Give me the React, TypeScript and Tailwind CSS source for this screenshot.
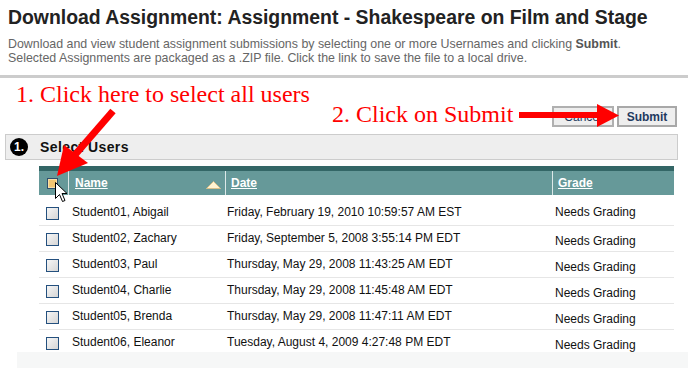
import React from 'react';

interface Submission {
  name: string;
  date: string;
  grade: string;
}

const rows: Submission[] = [
  { name: 'Student01, Abigail', date: 'Friday, February 19, 2010 10:59:57 AM EST', grade: 'Needs Grading' },
  { name: 'Student02, Zachary', date: 'Friday, September 5, 2008 3:55:14 PM EDT', grade: 'Needs Grading' },
  { name: 'Student03, Paul', date: 'Thursday, May 29, 2008 11:43:25 AM EDT', grade: 'Needs Grading' },
  { name: 'Student04, Charlie', date: 'Thursday, May 29, 2008 11:45:48 AM EDT', grade: 'Needs Grading' },
  { name: 'Student05, Brenda', date: 'Thursday, May 29, 2008 11:47:11 AM EDT', grade: 'Needs Grading' },
  { name: 'Student06, Eleanor', date: 'Tuesday, August 4, 2009 4:27:48 PM EDT', grade: 'Needs Grading' },
];

function RowCheckbox() {
  return (
    <div className="w-[13px] h-[13px] border border-[#24507e] bg-gradient-to-br from-[#f6f6f6] to-[#d6d6d6]" />
  );
}

function HeaderCell({ label, className }: { label: string; className: string }) {
  return (
    <div className={`h-full flex items-center ${className}`}>
      <span className="text-[12px] font-bold text-white underline">{label}</span>
    </div>
  );
}

function Separator() {
  return <div className="w-px h-full bg-[#dce8e8]" />;
}

export default function App() {
  return (
    <div className="relative w-[688px] h-[369px] overflow-hidden bg-white font-['Liberation_Sans',Arial,sans-serif]">
      <h1 className="pl-2 pt-[5px] text-[19.4px] leading-[24px] font-bold text-[#222222]">
        Download Assignment: Assignment - Shakespeare on Film and Stage
      </h1>
      <p className="pl-2 mt-[8px] text-[12.4px] leading-[14px] text-[#666666] whitespace-nowrap">
        Download and view student assignment submissions by selecting one or more Usernames and clicking{' '}
        <b className="text-[#555555]">Submit</b>.
        <br />
        Selected Assignments are packaged as a .ZIP file. Click the link to save the file to a local drive.
      </p>
      <div className="mt-[10px] h-[3px] bg-[#cccccc]" />

      <div className="mt-[28px] pr-[11px] flex justify-end gap-[3px]">
        <button className="w-[62px] h-[21px] border-2 border-[#b0b0b0] bg-[#eeeeee] text-[12px] text-[#1f3a5f]">
          Cancel
        </button>
        <button className="w-[60px] h-[21px] border-2 border-[#a8a8a8] bg-[#eeeeee] text-[12px] font-bold text-[#1f3a5f]">
          Submit
        </button>
      </div>

      <div className="ml-[5px] mr-[10px] mt-[7px] h-[26px] flex items-center gap-[12px] pl-[4px] border border-[#cccccc] bg-[#eeeeee]">
        <div className="w-[18px] h-[18px] rounded-full bg-black flex items-center justify-center">
          <span className="text-[12px] font-bold text-white leading-none">1.</span>
        </div>
        <span className="text-[14px] font-bold tracking-[0.4px] text-[#111111]">Select Users</span>
      </div>

      <div className="ml-[39px] w-[635px] mt-[6px]">
        <div className="h-[29px] flex border-t-[5px] border-[#336666] bg-[#669999]">
          <div className="w-[29px] h-full flex items-center pl-[8px]">
            <div className="w-[11px] h-[11px] border border-[#2f4f6f] bg-[#f3c673] shadow-[inset_0_0_0_1px_#f7e0a8]" />
          </div>
          <Separator />
          <div className="w-[156px] h-full flex items-center justify-between pl-[6px] pr-[4px]">
            <span className="text-[12px] font-bold text-white underline">Name</span>
            <svg width="15" height="8" viewBox="0 0 15 8" className="mt-[4px]">
              <polygon points="7.5,0.5 14.5,7.5 0.5,7.5" fill="#fff3d2" stroke="#d9c08a" strokeWidth="1" />
            </svg>
          </div>
          <Separator />
          <HeaderCell label="Date" className="w-[326px] pl-[5px]" />
          <Separator />
          <HeaderCell label="Grade" className="flex-1 pl-[5px]" />
        </div>

        <div className="h-[5px]" />
        {rows.map((row, i) => (
          <div
            key={row.name}
            className={`flex text-[12px] leading-[16px] text-[#111111] ${
              i < rows.length - 1 ? 'h-[26px] border-b border-[#e6e6e6]' : 'h-[22px]'
            }`}
          >
            <div className="w-[29px] pl-[7px] pt-[7px]">
              <RowCheckbox />
            </div>
            <div className="w-[157px] pl-[4px] pt-[4px]">{row.name}</div>
            <div className="w-[327px] pl-[2px] pt-[4px]">{row.date}</div>
            <div className={`flex-1 pl-[3px] ${i === 0 ? 'pt-[4px]' : 'pt-[7px]'}`}>{row.grade}</div>
          </div>
        ))}
      </div>
      <div className="ml-[17px] h-[16px] bg-[#f6f7f7]" />

      {/* annotations drawn over the screenshot */}
      <div className="absolute left-[16px] top-[82px] text-[24px] leading-[24px] text-[#ff0000] font-['Liberation_Serif','Times_New_Roman',serif] whitespace-nowrap">
        1. Click here to select all users
      </div>
      <div className="absolute left-[332px] top-[102px] text-[24px] leading-[24px] text-[#ff0000] font-['Liberation_Serif','Times_New_Roman',serif] whitespace-nowrap">
        2. Click on Submit
      </div>
      <svg className="absolute inset-0 pointer-events-none" width="688" height="369" viewBox="0 0 688 369">
        <line x1="113" y1="111" x2="74" y2="156" stroke="#ff0000" strokeWidth="7" />
        <polygon points="57,176 64,145 88,163" fill="#ff0000" />
        <rect x="519" y="112" width="80" height="6" fill="#ff0000" />
        <polygon points="597,104 619,115.5 597,127" fill="#ff0000" />
        <path
          d="M0.5 0.5 L0.5 16.5 L4.5 12.5 L7.5 19.5 L10 18.5 L7 11.5 L12 11.5 Z"
          transform="translate(55 182)"
          fill="#ffffff"
          stroke="#000000"
          strokeWidth="1"
        />
      </svg>
    </div>
  );
}
